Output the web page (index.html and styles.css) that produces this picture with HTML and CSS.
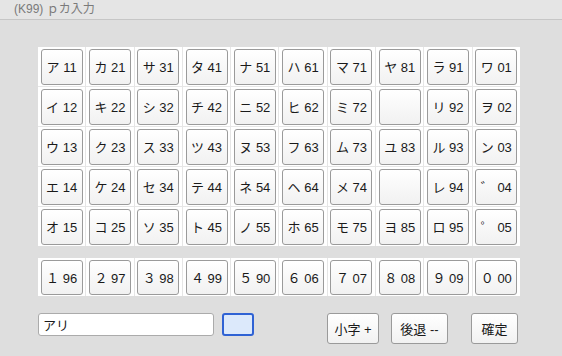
FILE: index.html
```html
<!DOCTYPE html>
<html lang="ja">
<head>
<meta charset="utf-8">
<link rel="stylesheet" href="styles.css">
</head>
<body>
<div class="titlebar">(K99) ｐカ入力</div>
<div class="content">
  <div class="panel kana">
    <div class="cell"><button class="key">ア 11</button></div>
    <div class="cell"><button class="key">カ 21</button></div>
    <div class="cell"><button class="key">サ 31</button></div>
    <div class="cell"><button class="key">タ 41</button></div>
    <div class="cell"><button class="key">ナ 51</button></div>
    <div class="cell"><button class="key">ハ 61</button></div>
    <div class="cell"><button class="key">マ 71</button></div>
    <div class="cell"><button class="key">ヤ 81</button></div>
    <div class="cell"><button class="key">ラ 91</button></div>
    <div class="cell"><button class="key">ワ 01</button></div>

    <div class="cell"><button class="key">イ 12</button></div>
    <div class="cell"><button class="key">キ 22</button></div>
    <div class="cell"><button class="key">シ 32</button></div>
    <div class="cell"><button class="key">チ 42</button></div>
    <div class="cell"><button class="key">ニ 52</button></div>
    <div class="cell"><button class="key">ヒ 62</button></div>
    <div class="cell"><button class="key">ミ 72</button></div>
    <div class="cell"><button class="key"></button></div>
    <div class="cell"><button class="key">リ 92</button></div>
    <div class="cell"><button class="key">ヲ 02</button></div>

    <div class="cell"><button class="key">ウ 13</button></div>
    <div class="cell"><button class="key">ク 23</button></div>
    <div class="cell"><button class="key">ス 33</button></div>
    <div class="cell"><button class="key">ツ 43</button></div>
    <div class="cell"><button class="key">ヌ 53</button></div>
    <div class="cell"><button class="key">フ 63</button></div>
    <div class="cell"><button class="key">ム 73</button></div>
    <div class="cell"><button class="key">ユ 83</button></div>
    <div class="cell"><button class="key">ル 93</button></div>
    <div class="cell"><button class="key">ン 03</button></div>

    <div class="cell"><button class="key">エ 14</button></div>
    <div class="cell"><button class="key">ケ 24</button></div>
    <div class="cell"><button class="key">セ 34</button></div>
    <div class="cell"><button class="key">テ 44</button></div>
    <div class="cell"><button class="key">ネ 54</button></div>
    <div class="cell"><button class="key">ヘ 64</button></div>
    <div class="cell"><button class="key">メ 74</button></div>
    <div class="cell"><button class="key"></button></div>
    <div class="cell"><button class="key">レ 94</button></div>
    <div class="cell"><button class="key">゛ 04</button></div>

    <div class="cell"><button class="key">オ 15</button></div>
    <div class="cell"><button class="key">コ 25</button></div>
    <div class="cell"><button class="key">ソ 35</button></div>
    <div class="cell"><button class="key">ト 45</button></div>
    <div class="cell"><button class="key">ノ 55</button></div>
    <div class="cell"><button class="key">ホ 65</button></div>
    <div class="cell"><button class="key">モ 75</button></div>
    <div class="cell"><button class="key">ヨ 85</button></div>
    <div class="cell"><button class="key">ロ 95</button></div>
    <div class="cell"><button class="key">゜ 05</button></div>
  </div>

  <div class="panel digits">
    <div class="cell"><button class="key">１ 96</button></div>
    <div class="cell"><button class="key">２ 97</button></div>
    <div class="cell"><button class="key">３ 98</button></div>
    <div class="cell"><button class="key">４ 99</button></div>
    <div class="cell"><button class="key">５ 90</button></div>
    <div class="cell"><button class="key">６ 06</button></div>
    <div class="cell"><button class="key">７ 07</button></div>
    <div class="cell"><button class="key">８ 08</button></div>
    <div class="cell"><button class="key">９ 09</button></div>
    <div class="cell"><button class="key">０ 00</button></div>
  </div>

  <div class="controls">
    <input class="field" type="text" value="アリ">
    <div class="swatch"></div>
    <button class="btn btn-small">小字 +</button>
    <button class="btn btn-back">後退 --</button>
    <button class="btn btn-ok">確定</button>
  </div>
</div>
</body>
</html>
```

FILE: styles.css
```css
html, body {
  margin: 0;
  padding: 0;
}
body {
  width: 562px;
  height: 356px;
  overflow: hidden;
  background: #dedede;
  font-family: "Liberation Sans", "Noto Sans CJK JP", sans-serif;
  font-size: 13px;
  color: #1a1a1a;
}
.titlebar {
  height: 20px;
  box-sizing: border-box;
  padding-left: 14px;
  line-height: 19px;
  font-size: 12px;
  color: #7a7a7a;
  background: #e5e5e5;
  border-bottom: 1px solid #c6c6c6;
}
.content {
  padding-left: 38px;
  padding-top: 27px;
  display: flex;
  flex-direction: column;
  align-items: flex-start;
}
.panel {
  width: 482px;
  display: grid;
  grid-template-columns: repeat(10, 1fr);
  gap: 1px;
  background: #e6e6e6;
}
.kana {
  grid-template-rows: repeat(5, 39px);
}
.digits {
  margin-top: 12px;
  grid-template-rows: 38px;
}
.cell {
  background: #fff;
  display: flex;
  align-items: center;
  justify-content: center;
}
.key, .btn {
  font-family: "Liberation Sans", "Noto Sans CJK JP", sans-serif;
  font-size: 13px;
  color: #1a1a1a;
  background: linear-gradient(#ffffff, #f1f1f1);
  border: 1px solid #9a9a9a;
  border-radius: 3px;
  padding: 0;
  white-space: pre;
}
.key {
  width: 42px;
  height: 36px;
}
.digits .key {
  height: 35px;
}
.controls {
  margin-top: 17px;
  display: flex;
  align-items: flex-start;
}
.field {
  width: 176px;
  height: 23px;
  box-sizing: border-box;
  border: 1px solid #ababab;
  border-radius: 3px;
  background: #fff;
  padding: 0 4px;
  font-family: "Liberation Sans", "Noto Sans CJK JP", sans-serif;
  font-size: 13px;
  color: #1a1a1a;
  outline: none;
}
.swatch {
  margin-left: 8px;
  width: 32px;
  height: 23px;
  box-sizing: border-box;
  border: 2px solid #2f62d4;
  border-radius: 3px;
  background: #dce9fb;
}
.btn {
  height: 31px;
  box-sizing: border-box;
}
.btn-small {
  margin-left: 73px;
  width: 52px;
}
.btn-back {
  margin-left: 12px;
  width: 57px;
}
.btn-ok {
  margin-left: 23px;
  width: 47px;
}
```
